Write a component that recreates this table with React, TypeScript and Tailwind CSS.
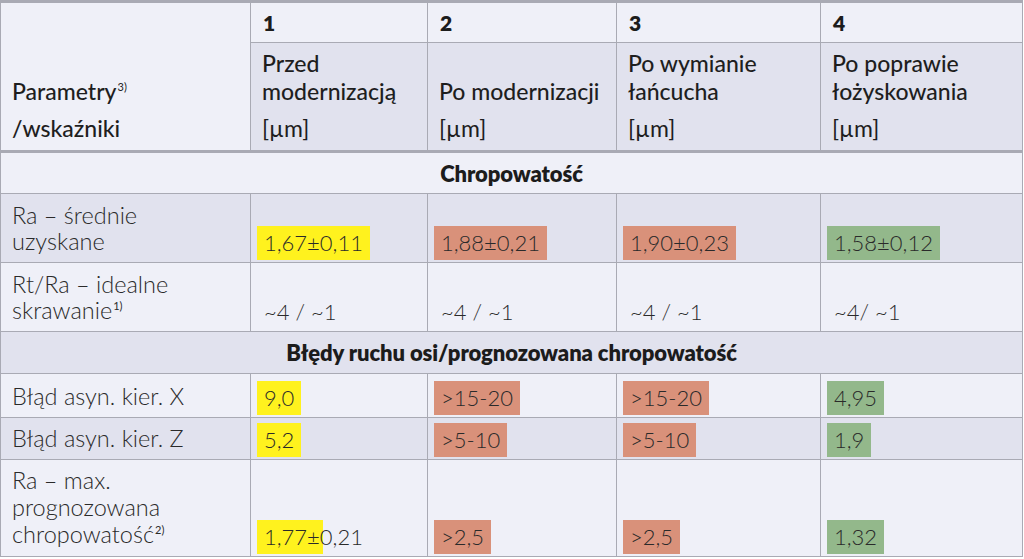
import React from "react";

const LIGHT = "bg-[#eff0f8]";
const DARK = "bg-[#e1e2ee]";
const B = "border border-[#a9aab4]";
const COND = "font-['Lato',sans-serif] font-extrabold";

type HL = "y" | "r" | "g" | "n" | "half";

function V({ c, children }: { c: HL; children: React.ReactNode }) {
  const bg =
    c === "y"
      ? "bg-[#fff21e]"
      : c === "r"
      ? "bg-[#d9917a]"
      : c === "g"
      ? "bg-[#93b88b]"
      : c === "half"
      ? "bg-[linear-gradient(90deg,#fff21e_66px,transparent_66px)]"
      : "";
  return (
    <span className={`inline-block px-[7px] py-[4px] leading-[26px] ${bg}`}>
      {children}
    </span>
  );
}

function ValCell({ c, children }: { c: HL; children: React.ReactNode }) {
  return (
    <td className={`${B} align-bottom pl-[6px] pb-[2px] pt-0`}>
      <V c={c}>{children}</V>
    </td>
  );
}

function LabelCell({ children }: { children: React.ReactNode }) {
  return (
    <td className={`${B} align-bottom pl-[11px] pr-2 pb-[8px] pt-0 leading-[26px] text-[23.5px]`}>
      {children}
    </td>
  );
}

function Sup({ children }: { children: React.ReactNode }) {
  return (
    <span className="text-[11px] leading-none relative -top-[9px] font-normal ml-[1px]">
      {children}
    </span>
  );
}

function HeadCell({ children }: { children: React.ReactNode }) {
  return (
    <td className={`${B} ${DARK} align-bottom pl-[11px] pr-1 pb-[8px] pt-0`}>
      <div className="leading-[28px]">{children}</div>
      <div className="leading-[28px] mt-[9px] font-normal">[µm]</div>
    </td>
  );
}

function NumCell({ children }: { children: React.ReactNode }) {
  return (
    <td className={`${B} ${LIGHT} align-middle pl-[12px] ${COND} text-[21px] text-[#1c1c1c]`}>
      {children}
    </td>
  );
}

function Section({ children, bg }: { children: React.ReactNode; bg: string }) {
  return (
    <tr className="h-[42px]">
      <td
        colSpan={5}
        className={`${B} ${bg} text-center align-middle ${COND} text-[22px] tracking-[-0.1px] text-[#1c1c1c]`}
      >
        {children}
      </td>
    </tr>
  );
}

export default function App() {
  return (
    <div className="w-[1024px] h-[559px] bg-white overflow-hidden">
      <table className="table-fixed border-collapse w-[1022px] font-['Lato',sans-serif] font-light text-[22px] text-[#2a2a2a] border-t-[3px] border-t-[#a9aab4]">
        <colgroup>
          <col className="w-[250px]" />
          <col className="w-[177px]" />
          <col className="w-[189px]" />
          <col className="w-[204px]" />
          <col className="w-[202px]" />
        </colgroup>
        <tbody>
          <tr className="h-[41px]">
            <td
              rowSpan={2}
              className={`${B} ${LIGHT} align-bottom pl-[11px] pb-[8px] font-medium text-[23px] text-[#1e1e1e] border-b-[3px]`}
            >
              <div className="leading-[28px]">
                Parametry<Sup>3)</Sup>
              </div>
              <div className="leading-[28px] mt-[9px]">/wskaźniki</div>
            </td>
            <NumCell>1</NumCell>
            <NumCell>2</NumCell>
            <NumCell>3</NumCell>
            <NumCell>4</NumCell>
          </tr>
          <tr className="h-[109px] font-medium text-[23px] text-[#1e1e1e] [&>td]:border-b-[3px]">
            <HeadCell>
              Przed
              <br />
              modernizacją
            </HeadCell>
            <HeadCell>Po modernizacji</HeadCell>
            <HeadCell>
              Po wymianie
              <br />
              łańcucha
            </HeadCell>
            <HeadCell>
              Po poprawie
              <br />
              łożyskowania
            </HeadCell>
          </tr>

          <Section bg={LIGHT}>Chropowatość</Section>

          <tr className={`h-[69px] ${DARK}`}>
            <LabelCell>
              Ra – średnie
              <br />
              uzyskane
            </LabelCell>
            <ValCell c="y">1,67±0,11</ValCell>
            <ValCell c="r">1,88±0,21</ValCell>
            <ValCell c="r">1,90±0,23</ValCell>
            <ValCell c="g">1,58±0,12</ValCell>
          </tr>
          <tr className={`h-[69px] ${LIGHT}`}>
            <LabelCell>
              Rt/Ra – idealne
              <br />
              skrawanie<Sup>1)</Sup>
            </LabelCell>
            <ValCell c="n">~4 / ~1</ValCell>
            <ValCell c="n">~4 / ~1</ValCell>
            <ValCell c="n">~4 / ~1</ValCell>
            <ValCell c="n">~4/ ~1</ValCell>
          </tr>

          <Section bg={DARK}>Błędy ruchu osi/prognozowana chropowatość</Section>

          <tr className={`h-[44px] ${LIGHT}`}>
            <LabelCell>Błąd asyn. kier. X</LabelCell>
            <ValCell c="y">9,0</ValCell>
            <ValCell c="r">&gt;15-20</ValCell>
            <ValCell c="r">&gt;15-20</ValCell>
            <ValCell c="g">4,95</ValCell>
          </tr>
          <tr className={`h-[42px] ${DARK}`}>
            <LabelCell>Błąd asyn. kier. Z</LabelCell>
            <ValCell c="y">5,2</ValCell>
            <ValCell c="r">&gt;5-10</ValCell>
            <ValCell c="r">&gt;5-10</ValCell>
            <ValCell c="g">1,9</ValCell>
          </tr>
          <tr className={`h-[97px] ${LIGHT}`}>
            <LabelCell>
              <div className="leading-[27px]">
                Ra – max.
                <br />
                prognozowana
                <br />
                chropowatość<Sup>2)</Sup>
              </div>
            </LabelCell>
            <ValCell c="half">1,77±0,21</ValCell>
            <ValCell c="r">&gt;2,5</ValCell>
            <ValCell c="r">&gt;2,5</ValCell>
            <ValCell c="g">1,32</ValCell>
          </tr>
        </tbody>
      </table>
    </div>
  );
}
